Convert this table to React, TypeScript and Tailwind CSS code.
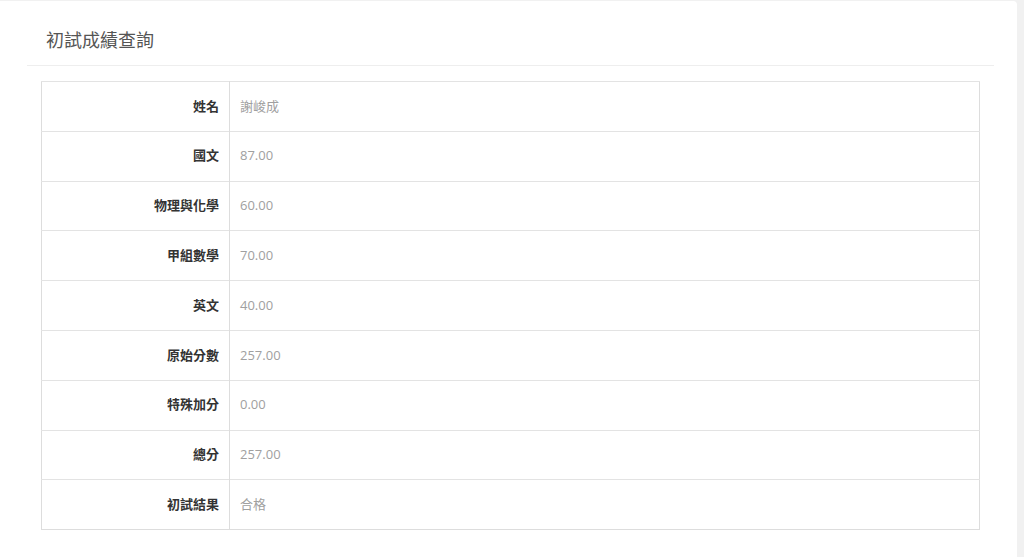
const ROWS: [string, string][] = [
  ['姓名', '謝峻成'],
  ['國文', '87.00'],
  ['物理與化學', '60.00'],
  ['甲組數學', '70.00'],
  ['英文', '40.00'],
  ['原始分數', '257.00'],
  ['特殊加分', '0.00'],
  ['總分', '257.00'],
  ['初試結果', '合格'],
]

export default function App() {
  return (
    <div
      className="h-[557px] w-[1024px] overflow-hidden bg-[#f1f1f1] pt-px pr-[7px]"
      style={{ fontFamily: '"Open Sans", "Noto Sans CJK TC", sans-serif' }}
    >
      <div className="h-full rounded-tr-[4px] bg-white px-[27px] pr-[23px]">
        {/* 標題 */}
        <div className="flex h-[65px] items-center border-b border-[#eeeeee] pl-[19px] pt-[14px]">
          <h2 className="text-[18px] font-normal text-[#555]">初試成績查詢</h2>
        </div>

        {/* 成績表 */}
        <table className="mt-[15px] ml-[14px] w-[939px] border-collapse border border-[#dddddd] text-[13px]">
          <tbody>
            {ROWS.map(([label, value]) => (
              <tr key={label} className="h-[49.8px] border-t border-[#e3e3e3]">
                <th className="w-[188px] border-r border-[#dddddd] pr-[10px] text-right font-bold text-[#333]">
                  {label}
                </th>
                <td className="pl-[10px] text-left font-normal text-[#a0a0a0]">{value}</td>
              </tr>
            ))}
          </tbody>
        </table>
      </div>
    </div>
  )
}
